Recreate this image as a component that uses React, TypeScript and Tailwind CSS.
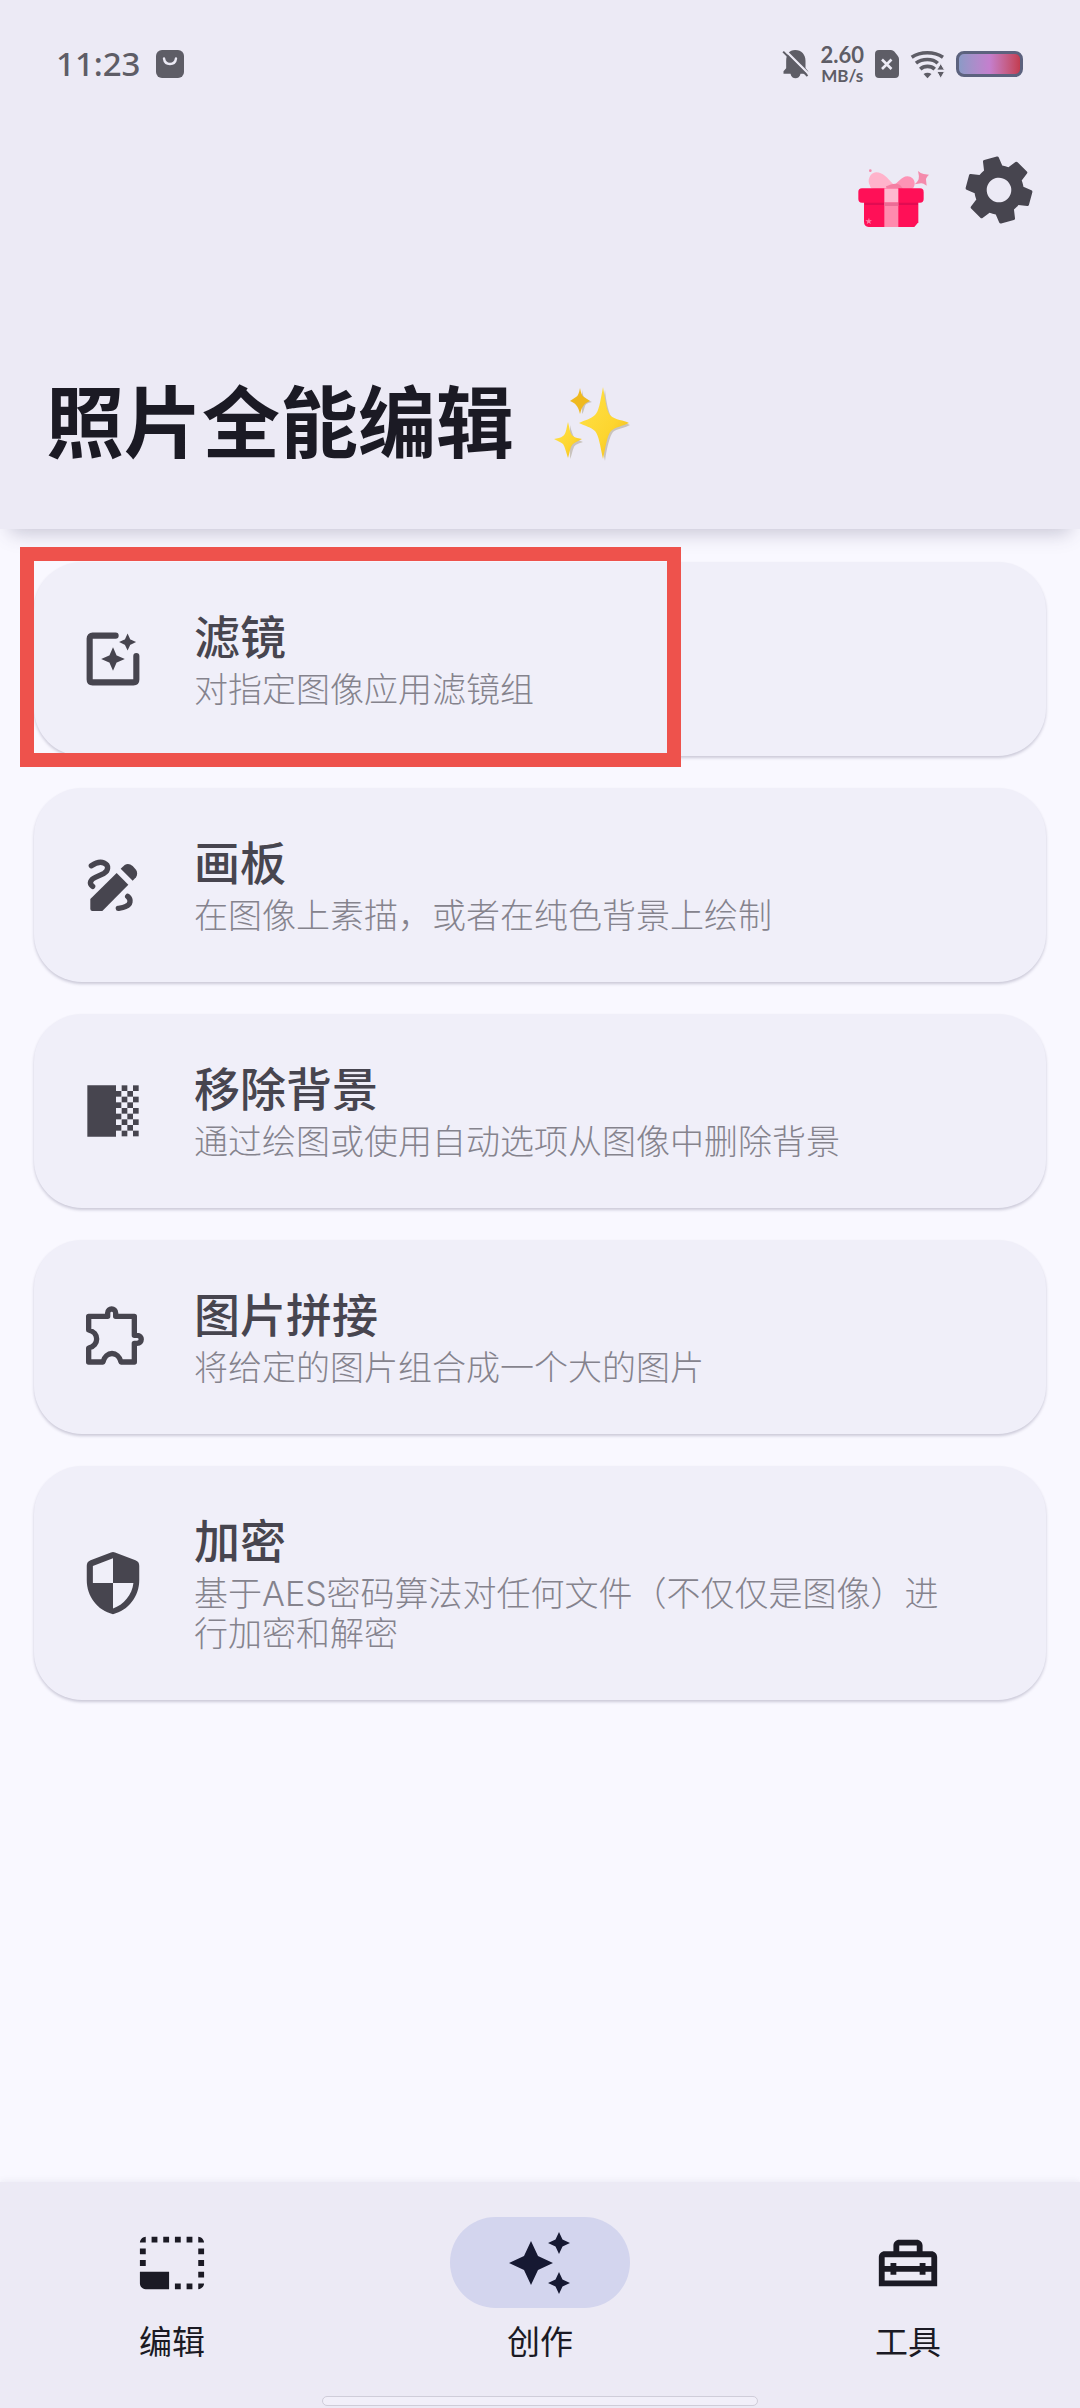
import React, { useState } from 'react';
import {
  MdOutlineHomeRepairService,
  MdPhotoSizeSelectSmall,
  MdSettings,
} from 'react-icons/md';

interface IconProps {
  className?: string;
}

const BagIcon = ({ className }: IconProps) => (
  <svg viewBox="0 0 28 28" className={className} aria-hidden="true">
    <rect width="28" height="28" rx="6" fill="currentColor" />
    <path d="M8 8.5c1 7.3 11 7.3 12 0" fill="none" stroke="#eceaf5" strokeWidth="2.4" strokeLinecap="round" />
  </svg>
);

const BellOffIcon = ({ className }: IconProps) => (
  <svg viewBox="76 86 80 90" className={className} aria-hidden="true">
    <path
      d="M115 89c19 0 31 14 31 32v22l8 10v7h-23c-3 18-27 18-30 0H80v-7l8-9v-23c0-18 9-32 27-32z"
      fill="currentColor"
    />
    <path d="M84 89l72 72" stroke="#eceaf5" strokeWidth="7" />
    <path d="M79 94l73 73" stroke="currentColor" strokeWidth="6" />
  </svg>
);

const SimIcon = ({ className }: IconProps) => (
  <svg viewBox="0 0 24 28" className={className} aria-hidden="true">
    <path d="M4 0h12q2 0 3.300 1.500l3.200 4Q24 7 24 9v15q0 4-4 4H4q-4 0-4-4V4q0-4 4-4z" fill="currentColor" />
    <path d="M7 9.500l9.500 9.500M16.500 9.500L7 19" stroke="#eceaf5" strokeWidth="2.600" />
  </svg>
);

const WifiIcon = ({ className }: IconProps) => (
  <svg viewBox="454 90 106 88" className={className} aria-hidden="true">
    <g fill="none" stroke="currentColor" strokeWidth="11">
      <path d="M459 112c27-18 68-18 95 0" />
      <path d="M472 130c19-15 51-15 66 0" />
      <path d="M485 148c12-11 32-11 44 0" />
    </g>
    <path d="M495 163q12-8 24 0l-12 13z" fill="currentColor" />
    <path d="M547 131l12 20h-24zM547 176l12-21h-24z" fill="currentColor" stroke="#eceaf5" strokeWidth="3" />
  </svg>
);

const GiftIcon = ({ className }: IconProps) => (
  <svg viewBox="290 440 225 189" className={className} aria-hidden="true">
    <path d="M332 496c-10-16 0-38 18-40 18-1 34 16 52 36 12 4 12 12 4 14h-60c-8 0-14-4-14-10z" fill="#ffb3cb" />
    <path d="M402 496c12-6 24-28 42-28 12 0 22 10 22 20s-4 18-12 18h-44z" fill="#fd93b5" />
    <path d="M380 498c14-6 30-12 42-4l10 12h-50z" fill="#f47fa3" />
    <path d="M476 452q10 9 17 9l16 2q-10 10-9 15l2 18q-12-8-17-7l-19 3q11-10 12-16 2-8-2-24z" fill="#f48bac" />
    <circle cx="333" cy="451" r="4" fill="#f48bac" />
    <path d="M314 540h163v66l-12 14H328q-14-2-14-16z" fill="#ff1057" />
    <rect x="297" y="504" width="196" height="43" rx="11" fill="#ff1057" />
    <path d="M316 547h160v7H316z" fill="#e20b52" />
    <path d="M375 504h42v43h-42z" fill="#ffb8cf" />
    <path d="M375 547h42v73h-42z" fill="#ff8bae" />
    <path d="M375 547h42v10h-42z" fill="#ec6d96" />
    <path d="M329 592l2 8 7-1-6 5 3 7-7-4-6 5 2-8-6-5 8 1z" fill="#ff7ba3" />
  </svg>
);

const SparklesEmoji = ({ className }: IconProps) => (
  <svg viewBox="0 0 80 78" className={className} role="img" aria-label="✨">
    <defs>
      <linearGradient id="gold" x1="0" y1="0" x2="1" y2="1">
        <stop offset="0" stopColor="#ffe24a" />
        <stop offset="0.6" stopColor="#fdd52f" />
        <stop offset="1" stopColor="#eeb41c" />
      </linearGradient>
    </defs>
    <g fill="#c9c3bd">
      <path d="M53 5c2 20 6 28 9 30 4 3 12 3 16 5-5 3-14 4-17 7-3 4-6 14-8 29-3-14-4-24-8-28z" />
      <path d="M18 40c2 9 4 13 6 14l7 3c-6 2-8 3-9 5-2 4-2 8-4 12z" />
      <path d="M30 5c1 6 2 8 4 9l6 3c-5 1-6 2-7 4-1 3-1 5-3 8z" />
    </g>
    <path
      d="M51 2c3 17 4 26 8 29 4 4 13 4 18 7-6 3-14 4-18 8-4 5-5 14-8 28-3-14-4-23-8-28-4-4-10-5-16-8 6-3 12-4 16-8 4-4 5-12 8-28z"
      fill="url(#gold)"
    />
    <path
      d="M16 37c2 8 2 12 5 14 2 2 6 2 9 3-3 2-7 3-9 5-3 3-3 8-5 14-2-6-3-11-5-14-2-2-6-3-9-5 3-1 7-1 9-3 3-2 3-6 5-14z"
      fill="url(#gold)"
    />
    <path
      d="M28 3c1 5 2 8 4 9l6 4c-2 1-5 2-6 4-2 2-3 5-4 9-1-4-2-7-4-9-1-2-4-3-6-4l6-4c2-1 3-4 4-9z"
      fill="#efb91f"
    />
  </svg>
);

const FilterIcon = ({ className }: IconProps) => (
  <svg viewBox="0 0 24 24" className={className} aria-hidden="true">
    <path
      d="M12.900 4H5q-1 0-1 1v14q0 1 1 1h14q1 0 1-1v-8"
      fill="none"
      stroke="currentColor"
      strokeWidth="2.100"
      strokeLinecap="round"
    />
    <path
      d="M12 8.700l1 2.300 2.300 1-2.300 1-1 2.300-1-2.300-2.300-1 2.300-1zM17 4l.7 1.500 1.500.7-1.500.7-.7 1.500-.7-1.500-1.500-.7 1.500-.7z"
      fill="currentColor"
      stroke="currentColor"
      strokeWidth="0.600"
    />
  </svg>
);

const DrawIcon = ({ className }: IconProps) => (
  <svg viewBox="54 28 210 210" className={className} aria-hidden="true">
    <path d="M91 175l79-78 35 35-78 79H97q-6 0-6-6z" fill="currentColor" />
    <path d="M182 84l12-11q12-7 24 3l10 11q7 11 0 23l-10 10z" fill="currentColor" />
    <g fill="none" stroke="currentColor" strokeWidth="16" strokeLinecap="round">
      <path d="M94 75c12-8 27-13 38-8 16 7 13 23 0 31l-26 12c-15 7-20 18-8 27" />
      <path d="M203 167c12 10 8 25-5 30-8 4-16 5-23 6" />
    </g>
  </svg>
);

const CHECKER_ROWS = [0, 1, 2, 3, 4, 5, 6, 7, 8];

const RemoveBackgroundIcon = ({ className }: IconProps) => (
  <svg viewBox="54 48 210 210" className={className} fill="currentColor" aria-hidden="true">
    <path d="M82 76h86v154H82z" />
    {CHECKER_ROWS.map((row) => (
      <g key={row}>
        <rect x={row % 2 ? 167 : 185} y={76 + row * 17} width="17" height="17" />
        <rect x={row % 2 ? 202 : 219} y={76 + row * 17} width="17" height="17" />
      </g>
    ))}
  </svg>
);

const PuzzleIcon = ({ className }: IconProps) => (
  <svg viewBox="54 64 210 210" className={className} aria-hidden="true">
    <path
      d="M86 107h57V97c0-16 24-16 24 0v10h56v57h8c17 0 17 24 0 24h-8v56h-40c-8-34-46-34-54 0H86v-42c32-8 32-46 0-54z"
      fill="none"
      stroke="currentColor"
      strokeWidth="16"
      strokeLinejoin="round"
    />
  </svg>
);

const ShieldIcon = ({ className }: IconProps) => (
  <svg viewBox="0 0 24 24" className={className} aria-hidden="true">
    <path
      fillRule="evenodd"
      fill="currentColor"
      d="M12.700 1.500l7 2.700Q21 4.700 21 6.100V11c0 5.600-3.700 10.500-9 11.700C6.700 21.500 3 16.600 3 11V6.100q0-1.400 1.300-1.900l7-2.700q.7-.3 1.400 0zM12 3.500L5.100 6.200V12H12zM12 12v8.700c3.600-1.100 6.600-4.700 7-8.700z"
    />
  </svg>
);

const CreateIcon = ({ className }: IconProps) => (
  <svg viewBox="0 0 70 70" className={className} fill="currentColor" aria-hidden="true">
    <path d="M26 13l7 15 15 7-15 7-7 15-7-15-15-7 15-7z" />
    <path d="M54 4l3.500 7.500L65 15l-7.500 3.500L54 26l-3.500-7.500L43 15l7.500-3.500zM54 44l3.500 7.500L65 55l-7.500 3.500L54 66l-3.500-7.500L43 55l7.500-3.500z" />
  </svg>
);

const tools = [
  { icon: FilterIcon, title: '滤镜', subtitle: '对指定图像应用滤镜组', highlighted: true },
  { icon: DrawIcon, title: '画板', subtitle: '在图像上素描，或者在纯色背景上绘制' },
  { icon: RemoveBackgroundIcon, title: '移除背景', subtitle: '通过绘图或使用自动选项从图像中删除背景' },
  { icon: PuzzleIcon, title: '图片拼接', subtitle: '将给定的图片组合成一个大的图片' },
  { icon: ShieldIcon, title: '加密', subtitle: '基于AES密码算法对任何文件（不仅仅是图像）进行加密和解密' },
];

const tabs = [
  { icon: MdPhotoSizeSelectSmall, label: '编辑' },
  { icon: CreateIcon, label: '创作' },
  { icon: MdOutlineHomeRepairService, label: '工具' },
];

const StatusBar = () => (
  <div className="flex h-[128px] items-center justify-between pl-14 pr-[57px] text-[#5e5d66]">
    <div className="flex items-center gap-4 font-['Noto_Sans',sans-serif]">
      <span className="text-[33px] leading-10 font-medium">11:23</span>
      <BagIcon className="h-7 w-7" />
    </div>
    <div className="flex items-center gap-[11px]">
      <BellOffIcon className="h-[30px] w-[27px]" />
      <div className="flex flex-col items-center font-[Lato,sans-serif] font-bold">
        <span className="text-[22px] leading-[23px]">2.60</span>
        <span className="text-[17px] leading-5">MB/s</span>
      </div>
      <SimIcon className="h-7 w-6" />
      <WifiIcon className="h-[29px] w-[35px]" />
      <div className="h-[26px] w-[67px] rounded-lg border-[3px] border-[#5c627e] bg-linear-to-r from-[#8b9ac6] via-[#c47fce] to-[#c33c50]" />
    </div>
  </div>
);

const Header = () => (
  <header className="relative z-10 bg-[#eceaf5] shadow-[0_14px_18px_-10px_rgba(70,65,100,0.28)]">
    <StatusBar />
    <div className="flex h-[124px] items-center justify-end gap-8 pr-[45px]">
      <button aria-label="礼物" className="mt-4">
        <GiftIcon className="h-[63px] w-[75px]" />
      </button>
      <button aria-label="设置">
        <MdSettings className="-m-[5px] size-[82px] -rotate-[15deg] text-[#47454f]" />
      </button>
    </div>
    <div className="flex items-center gap-[38px] px-[46px] pt-[122px] pb-[55px]">
      <h1 className="text-[78px] leading-[100px] font-bold text-[#1b1a24]">照片全能编辑</h1>
      <SparklesEmoji className="h-[78px] w-20" />
    </div>
  </header>
);

export default function App() {
  const [activeTab, setActiveTab] = useState('创作');

  return (
    <div className="flex min-h-screen flex-col bg-[#f9f8ff] font-[Inter,'Noto_Sans_CJK_SC',sans-serif]">
      <Header />

      <main className="flex flex-1 flex-col gap-8 px-[34px] pt-[33px] pb-8">
        {tools.map((tool) => (
          <div key={tool.title} className="relative">
            <button className="flex w-full items-center gap-[46px] rounded-[48px] bg-[#f0eff9] py-[46px] pr-20 pl-11 text-left shadow-[0_2px_3px_rgba(60,55,90,0.24)]">
              <tool.icon className="size-[70px] shrink-0 text-[#47454f]" />
              <span className="flex flex-col gap-1">
                <span className="text-[46px] leading-[58px] font-medium text-[#47454f]">{tool.title}</span>
                <span className="text-[34px] leading-10 font-light text-[#85838d]">{tool.subtitle}</span>
              </span>
            </button>
            {tool.highlighted && (
              <div className="pointer-events-none absolute -top-[15px] -bottom-[11px] -left-[14px] z-20 w-[661px] border-[14px] border-[#ee524c]" />
            )}
          </div>
        ))}
      </main>

      <nav className="bg-[#eceaf5] shadow-[0_-2px_6px_rgba(70,65,100,0.06)]">
        <div className="flex justify-around gap-6 pt-[35px]">
          {tabs.map((tab) => (
            <button
              key={tab.label}
              onClick={() => setActiveTab(tab.label)}
              className="flex flex-1 flex-col items-center gap-3 text-[#1b1a24]"
            >
              <span
                className={`flex h-[91px] w-[180px] items-center justify-center rounded-full ${
                  activeTab === tab.label ? 'bg-[#d3d5ee] text-[#161932]' : ''
                }`}
              >
                <tab.icon className="size-[70px]" />
              </span>
              <span className="text-[33px] leading-11 font-normal">{tab.label}</span>
            </button>
          ))}
        </div>
        <div className="mx-auto mt-8 mb-0.5 h-[10px] w-[436px] rounded-full border border-[#cfcdd9] bg-[#f1eff9]" />
      </nav>
    </div>
  );
}
